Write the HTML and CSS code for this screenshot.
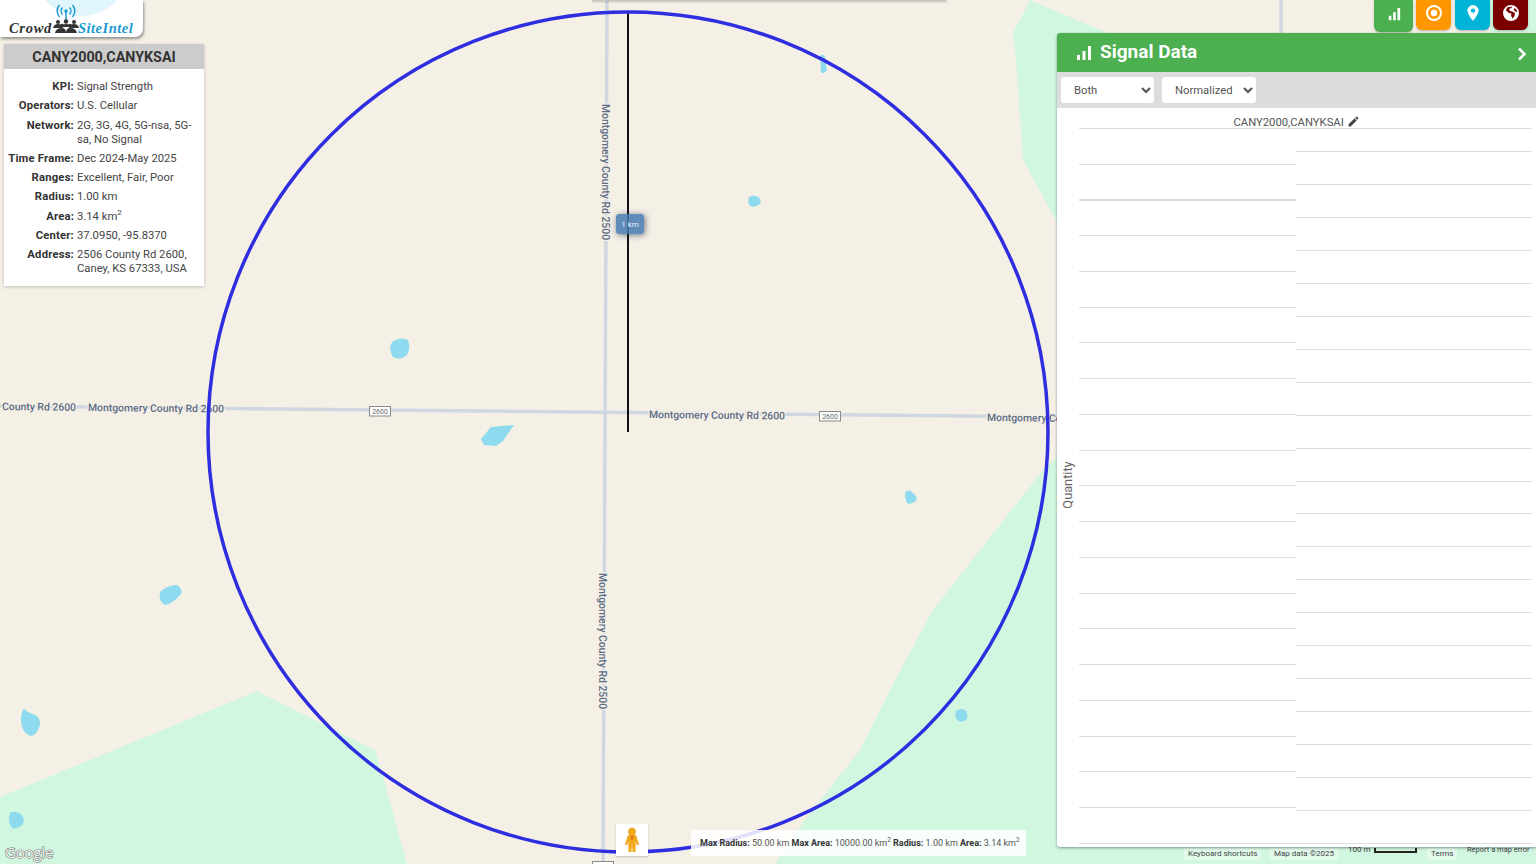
FILE: index.html
```html
<!DOCTYPE html>
<html lang="en">
<head>
<meta charset="utf-8">
<title>CrowdSiteIntel - Signal Data</title>
<link rel="stylesheet" href="styles.css">
</head>
<body>
<main class="stage">
  <svg class="map" viewBox="0 0 1536 864" width="1536" height="864" aria-label="Map">
    <g class="park">
      <path d="M1030 0 L1013 33 L1016 60 L1023 160 L1060 228 L1060 40 L1110 34 Z"/>
      <path d="M1060 455 L1043 470 L980 550 L933 610 L895 680 L860 750 L823 797 L800 827 L775 864 L1536 864 L1536 400 L1060 400 Z"/>
      <path d="M0 797 L257 691 L375 750 L384 780 L407 864 L0 864 Z"/>
      <path d="M1490 0 H1536 V32 H1490 Z"/>
    </g>
    <g class="water">
      <path d="M820 56 Q823 53 825 57 L827 70 Q824 75 821 72 Z"/>
      <path d="M749 197 Q754 194 758 197 Q762 200 760 204 Q755 208 750 206 Q747 202 749 197 Z"/>
      <path d="M392 342 Q400 336 408 340 Q411 348 407 355 Q400 361 393 357 Q388 349 392 342 Z"/>
      <path d="M491 427 L514 425 L503 441 L496 446 L484 445 L481 439 Z"/>
      <path d="M906 491 Q911 490 913 493 Q918 497 916 501 Q911 505 907 503 Q904 497 906 491 Z"/>
      <path d="M160 592 Q167 585 177 585 Q183 589 181 594 Q174 603 165 605 Q158 601 160 592 Z"/>
      <path d="M24 708 Q26 712 33 714 Q41 717 40 725 Q37 735 31 736 Q25 735 22 727 Q19 716 24 708 Z"/>
      <path d="M956 711 Q961 707 966 711 Q969 716 966 720 Q961 723 957 720 Q954 715 956 711 Z"/>
      <path d="M10 813 Q15 810 21 814 Q25 819 23 824 Q17 830 12 828 Q7 821 10 813 Z"/>
    </g>
    <g class="roads">
      <path d="M0 406 L1060 417"/>
      <path d="M607 0 L603 864"/>
      <path d="M1281 0 V34"/>
    </g>
    <g class="road-labels">
      <text x="2" y="410" transform="rotate(.6 2 410)">County Rd 2600</text>
      <text x="88" y="411" transform="rotate(.6 88 411)">Montgomery County Rd 2600</text>
      <text x="649" y="418" transform="rotate(.6 649 418)">Montgomery County Rd 2600</text>
      <text x="987" y="421" transform="rotate(.6 987 421)">Montgomery County Rd 2600</text>
      <text x="602" y="104" transform="rotate(90 602 104)">Montgomery County Rd 2500</text>
      <text x="599" y="573" transform="rotate(90 599 573)">Montgomery County Rd 2500</text>
    </g>
    <g class="shields">
      <rect x="369.500" y="406.500" width="21" height="9.500"/>
      <text x="380" y="414">2600</text>
      <rect x="819.500" y="411.500" width="21" height="9.500"/>
      <text x="830" y="419">2600</text>
      <rect x="592.500" y="861.500" width="21" height="9.500"/>
    </g>
    <path class="radius-line" d="M628 12 V432"/>
    <circle class="radius-circle" cx="628" cy="432" r="420"/>
    <text class="google" x="5" y="858">Google</text>
  </svg>

  <div class="top-sliver"></div>

  <div class="km-tag">1 km</div>

  <header class="logo">
    <svg class="logo-back" viewBox="0 0 143 37" width="143" height="37" aria-hidden="true">
      <ellipse cx="81" cy="-24" rx="45" ry="40"/>
    </svg>
    <svg class="logo-signal" viewBox="0 0 22 20" width="22" height="20" aria-hidden="true">
      <circle cx="11" cy="8" r="1.700"/>
      <path d="M11 9 V19 M7.500 4.500 A5 5 0 0 0 7.500 11.500 M14.500 4.500 A5 5 0 0 1 14.500 11.500 M4.500 2 A9 9 0 0 0 4.500 14 M17.500 2 A9 9 0 0 1 17.500 14"/>
    </svg>
    <span class="logo-crowd">Crowd</span>
    <svg class="logo-people" viewBox="0 0 26 14" width="26" height="14" aria-hidden="true">
      <circle cx="5" cy="3" r="2"/><circle cx="13" cy="2.500" r="2.200"/><circle cx="21" cy="3" r="2"/>
      <circle cx="9" cy="6.500" r="1.800"/><circle cx="17" cy="6.500" r="1.800"/>
      <path d="M0 9 Q1 5 5 5 Q9 5 10 9 Z M8 8 Q9 5 13 5 Q17 5 18 8 Z M16 9 Q17 5 21 5 Q25 5 26 9 Z M2 14 Q3 9 9 9 Q13 9 13 14 Z M13 14 Q13 9 17 9 Q23 9 24 14 Z"/>
    </svg>
    <span class="logo-site">SiteIntel</span>
  </header>

  <aside class="info">
    <h2 class="info-title">CANY2000,CANYKSAI</h2>
    <dl class="info-list">
      <dt>KPI:</dt><dd>Signal Strength</dd>
      <dt>Operators:</dt><dd>U.S. Cellular</dd>
      <dt>Network:</dt><dd>2G, 3G, 4G, 5G-nsa, 5G-sa, No Signal</dd>
      <dt>Time Frame:</dt><dd>Dec 2024-May 2025</dd>
      <dt>Ranges:</dt><dd>Excellent, Fair, Poor</dd>
      <dt>Radius:</dt><dd>1.00 km</dd>
      <dt>Area:</dt><dd>3.14 km<sup>2</sup></dd>
      <dt>Center:</dt><dd>37.0950, -95.8370</dd>
      <dt>Address:</dt><dd>2506 County Rd 2600, Caney, KS 67333, USA</dd>
    </dl>
  </aside>

  <nav class="tools">
    <button class="tool tool-green" type="button" aria-label="Signal data">
      <svg viewBox="0 0 16 16" width="14" height="14"><path d="M2 10h3v5H2zM7 6h3v9H7zM12 1h3v14h-3z"/></svg>
    </button>
    <button class="tool tool-orange" type="button" aria-label="Radius">
      <svg viewBox="0 0 18 18" width="18" height="18"><path fill-rule="evenodd" d="M9 1a8 8 0 1 1 0 16A8 8 0 0 1 9 1zm0 2a6 6 0 1 0 0 12A6 6 0 0 0 9 3zm0 2.800a3.200 3.200 0 1 1 0 6.400 3.200 3.200 0 0 1 0-6.400z"/></svg>
    </button>
    <button class="tool tool-cyan" type="button" aria-label="Location">
      <svg viewBox="0 0 14 18" width="14" height="18"><path fill-rule="evenodd" d="M7 1a5.600 5.600 0 0 1 5.600 5.600C12.600 10.500 7 17 7 17S1.400 10.500 1.400 6.600A5.600 5.600 0 0 1 7 1zm0 3.400a2.200 2.200 0 1 0 0 4.400 2.200 2.200 0 0 0 0-4.400z"/></svg>
    </button>
    <button class="tool tool-red" type="button" aria-label="Globe">
      <svg viewBox="0 0 18 18" width="18" height="18"><path fill-rule="evenodd" d="M9 1a8 8 0 1 1 0 16A8 8 0 0 1 9 1zM5 3.500 4 6.500l3 2.500 2.500.5-.5 2 1.500 3 2-2.500.5-3-3-1.500-2-.5L7 5l2.500-1 .5-1.500zM13 4l-1.500 1.500L14 8l1.500-.5z"/></svg>
    </button>
  </nav>

  <footer class="attrib">
    <span class="at at-keys">Keyboard shortcuts</span>
    <span class="at at-data">Map data ©2025</span>
    <span class="at at-scale">100 m <i class="scale-bar"></i></span>
    <span class="at at-terms">Terms</span>
    <span class="at at-report">Report a map error</span>
  </footer>

  <section class="panel">
    <header class="panel-head">
      <svg class="panel-icon" viewBox="0 0 16 16" width="16" height="16" aria-hidden="true"><path d="M1 10h3v5H1zM6.500 6h3v9h-3zM12 1h3v14h-3z"/></svg>
      <h1 class="panel-title">Signal Data</h1>
      <svg class="panel-chevron" viewBox="0 0 10 14" width="10" height="14" aria-hidden="true"><path d="M2 1.500 7.500 7 2 12.500"/></svg>
    </header>
    <div class="panel-tools">
      <select class="pick pick-both"><option>Both</option></select>
      <select class="pick pick-norm"><option>Normalized</option></select>
    </div>
    <div class="chart">
      <div class="chart-title">CANY2000,CANYKSAI
        <svg viewBox="0 0 24 24" width="13" height="13" aria-hidden="true"><path d="M3 17.250V21h3.750L17.810 9.940l-3.750-3.750L3 17.250zM20.710 7.040a1 1 0 0 0 0-1.410l-2.340-2.340a1 1 0 0 0-1.410 0l-1.830 1.830 3.750 3.750 1.830-1.830z"/></svg>
      </div>
      <div class="chart-body">
        <div class="axis"><span>Quantity</span></div>
        <div class="plot plot-left"></div>
        <div class="plot plot-right"></div>
      </div>
    </div>
  </section>

  <button class="pegman" type="button" aria-label="Street View">
    <svg viewBox="0 0 16 26" width="16" height="26"><path class="peg-a" d="M8 0.500 A4 4 0 0 1 10.500 7.600 L12.500 9 L15 18 L12.700 18 L11.700 14 L11.500 25 H8.600 L8 17 L7.400 25 H4.500 L4.300 14 L3.300 18 L1 18 L3.500 9 L5.500 7.600 A4 4 0 0 1 8 0.500 Z"/><path class="peg-b" d="M6 9 L8 14 L10 9 Z"/></svg>
  </button>

  <div class="stats">
    <b>Max Radius:</b> 50.00 km <b>Max Area:</b> 10000.00 km<sup>2</sup> <b>Radius:</b> 1.00 km <b>Area:</b> 3.14 km<sup>2</sup>
  </div>
</main>
</body>
</html>
```
FILE: styles.css
```css
* { box-sizing: border-box; }
html, body { margin: 0; height: 100%; }
body { font-family: Roboto, "Liberation Sans", sans-serif; color: #333; overflow: hidden; }

.stage { position: relative; width: 1536px; height: 864px; overflow: hidden; background: #f5f0e6; }
.map { position: absolute; inset: 0; display: block; }

.park path { fill: #d1f7e0; }
.water path { fill: #8edaee; }
.roads path { fill: none; stroke: #cfd7e0; stroke-width: 3.500; }
.road-labels text {
  font: 500 10.400px Roboto, sans-serif;
  fill: #5a6b85;
  stroke: #f5f0e6;
  stroke-width: 2.500px;
  paint-order: stroke;
}
.shields rect { fill: #fff; stroke: #8a8a8a; stroke-width: 1; }
.shields text { font: 7px Roboto, sans-serif; fill: #666; text-anchor: middle; }
.radius-line { fill: none; stroke: #111; stroke-width: 2; }
.radius-circle { fill: none; stroke: #2e2ee0; stroke-width: 3.500; }
.google {
  font: 500 15px "Open Sans", sans-serif;
  letter-spacing: -.2px;
  fill: #f4f4f4;
  stroke: #777;
  stroke-width: 1.200px;
  paint-order: stroke;
}

.top-sliver {
  position: absolute; left: 592px; top: 0; width: 355px; height: 1px;
  background: #c9c6bd; box-shadow: 0 1px 2px rgba(0,0,0,.3); border-radius: 0 0 3px 3px;
}

.km-tag {
  position: absolute; left: 616px; top: 214px; width: 28px; height: 20px;
  display: flex; align-items: center; justify-content: center;
  background: rgba(71,122,178,.85); color: #e8eef5;
  font-size: 8px; border-radius: 3px;
  box-shadow: 1px 1px 6px rgba(30,50,80,.65);
}

.logo {
  position: absolute; left: 0; top: 0; width: 143px; height: 37px;
  background: #fff; border-radius: 0 0 8px 0;
  box-shadow: 1px 2px 3px rgba(0,0,0,.4);
}
.logo-back { position: absolute; left: 0; top: 0; }
.logo-back ellipse { fill: #e1f5fc; }
.logo-signal { position: absolute; left: 55px; top: 3px; }
.logo-signal circle { fill: #1c9ad0; }
.logo-signal path { fill: none; stroke: #1c9ad0; stroke-width: 1.500; }
.logo-crowd, .logo-site {
  position: absolute; top: 19px;
  font: italic bold 14.500px/18px "Liberation Serif", serif;
  letter-spacing: .5px;
}
.logo-crowd { left: 9px; color: #333; letter-spacing: .7px; }
.logo-site { left: 78px; color: #1c9ad0; }
.logo-people { position: absolute; left: 53px; top: 19px; fill: #333; }

.info {
  position: absolute; left: 4px; top: 44px; width: 200px; height: 242px;
  background: #fff; box-shadow: 0 1px 3px rgba(0,0,0,.22);
}
.info-title {
  margin: 0; height: 25px; background: #ccc; color: #333;
  font-size: 14.300px; font-weight: 700; line-height: 26px; text-align: center;
}
.info-list {
  margin: 0; padding: 11px 9px 0 0;
  display: grid; grid-template-columns: 70px 1fr; column-gap: 3px; row-gap: 5.250px;
  font-size: 11.250px; line-height: 14px; color: #444;
}
.info-list dt { font-weight: 700; letter-spacing: .2px; text-align: right; color: #333; white-space: nowrap; }
.info-list dd { margin: 0; }
.info-list sup { font-size: 8px; line-height: 0; }

.tools { position: absolute; left: 1374px; top: 0; display: flex; gap: 3px; }
.tool {
  width: 35px; height: 30px; margin: 0; padding: 0; border: 0;
  display: flex; align-items: center; justify-content: center;
  border-radius: 0 0 6px 6px; fill: #fff;
  box-shadow: 0 1px 2px rgba(0,0,0,.25);
}
.tool svg { display: block; margin-top: -4px; }
.tool-green { width: 39px; height: 32px; background: #4caf50; }
.tool-orange { background: #ff9800; }
.tool-cyan { background: #00b4d8; margin-left: 1px; }
.tool-red { background: #7a0000; }

.panel {
  position: absolute; left: 1057px; top: 33px; width: 479px; height: 814px;
  display: flex; flex-direction: column;
  background: #fff; border-radius: 3px 0 0 3px;
  box-shadow: 0 1px 3px rgba(0,0,0,.4);
}
.panel-head {
  height: 39px; flex: none; display: flex; align-items: center;
  padding: 0 8px 0 19px; background: #4caf50; color: #fff; fill: #fff;
  border-radius: 3px 0 0 0;
}
.panel-icon { flex: none; }
.panel-title { margin: 0 0 2px 8px; flex: 1; font-size: 19px; font-weight: 700; line-height: 37px; }
.panel-chevron { margin-top: 3px; margin-right: 1px; fill: none; stroke: #fff; stroke-width: 2.500; }

.panel-tools {
  height: 36px; flex: none; display: flex; gap: 8px; padding: 5px 4px;
  background: #ddd;
}
.pick {
  height: 26px; border: 0; border-radius: 3px; background-color: #fff;
  font: 11.250px Roboto, sans-serif; color: #555; padding: 0 0 0 9px;
}
.pick-both { width: 93px; }
.pick-norm { width: 94px; }

.chart { flex: 1; display: flex; flex-direction: column; min-height: 0; }
.chart-title {
  height: 20px; flex: none; padding: 7px 0 0 0; text-align: center;
  font-size: 11.250px; line-height: 13px; color: #555; fill: #444;
}
.chart-title svg { vertical-align: -2px; }
.chart-body { flex: 1; display: flex; min-height: 0; padding-right: 4px; }
.axis { width: 22px; flex: none; position: relative; }
.axis span {
  position: absolute; left: 10px; top: 357px; transform: translate(-50%,-50%) rotate(-90deg);
  font-size: 12.750px; color: #666; white-space: nowrap;
}
.plot { height: 716px; }
.plot-left {
  width: 217px;
  background: repeating-linear-gradient(to bottom, #ddd 0, #ddd 1px, transparent 1px, transparent 35.750px);
}
.plot-right {
  flex: 1; border-top: 1px solid #ddd;
  background: repeating-linear-gradient(to bottom, transparent 0, transparent 22px, #ddd 22px, #ddd 23px, transparent 23px, transparent 32.950px);
}

.pegman {
  position: absolute; left: 616px; top: 824px; width: 32px; height: 32px; padding: 0; border: 0;
  display: flex; align-items: center; justify-content: center;
  background: #fff; box-shadow: 0 1px 2px rgba(0,0,0,.2);
}
.peg-a { fill: #f2a81d; }
.peg-b { fill: #e0701a; }

.stats {
  position: absolute; left: 691px; top: 830px; width: 335px; height: 26px;
  padding: 0 9px; background: rgba(255,255,255,.85);
  font-size: 9px; line-height: 26px; color: #555; white-space: nowrap;
}
.stats b { font-weight: 700; color: #333; }
.stats sup { font-size: 6.500px; line-height: 0; }

.at {
  position: absolute; font-size: 8px; line-height: 12px; color: #444; white-space: nowrap;
}
.at-keys { left: 1184px; top: 848px; padding: 0 4px; background: rgba(255,255,255,.35); }
.at-data { left: 1270px; top: 848px; padding: 0 4px; background: rgba(255,255,255,.35); }
.at-scale { left: 1348px; top: 844px; display: flex; gap: 3px; }
.scale-bar {
  display: block; width: 43px; height: 5px; margin-top: 4px;
  border: 2px solid #222; border-top: 0;
}
.at-terms { left: 1427px; top: 848px; padding: 0 4px; background: rgba(255,255,255,.35); }
.at-report { left: 1467px; top: 844px; font-size: 7.500px; }
```
